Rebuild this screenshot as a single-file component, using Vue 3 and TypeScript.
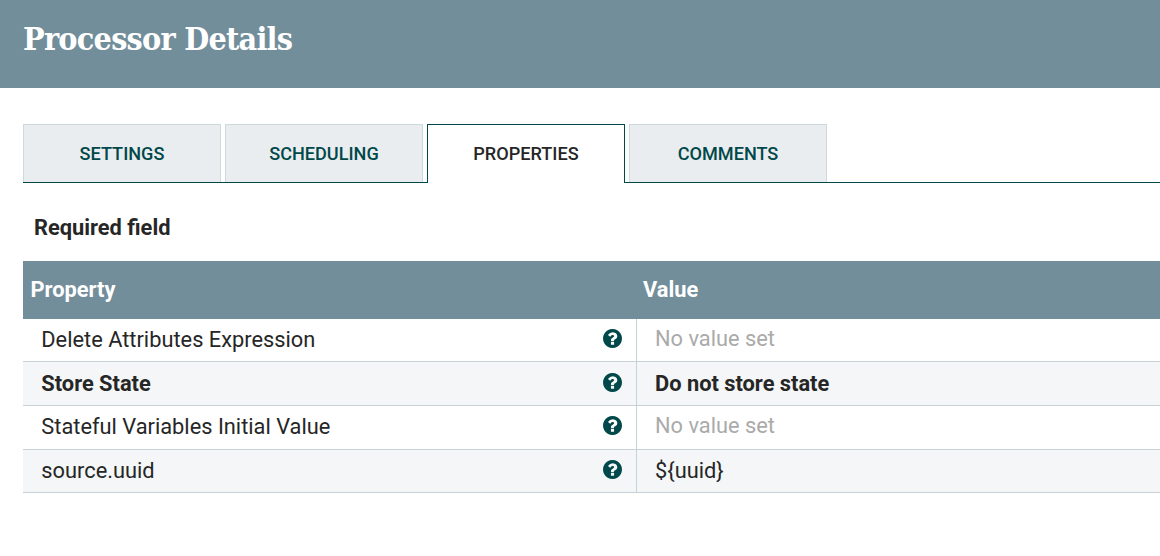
<script setup lang="ts">
interface Tab {
  label: string
  active: boolean
}

interface Property {
  name: string
  value: string | null
  required: boolean
}

const tabs: Tab[] = [
  { label: 'SETTINGS', active: false },
  { label: 'SCHEDULING', active: false },
  { label: 'PROPERTIES', active: true },
  { label: 'COMMENTS', active: false },
]

const properties: Property[] = [
  { name: 'Delete Attributes Expression', value: null, required: false },
  { name: 'Store State', value: 'Do not store state', required: true },
  { name: 'Stateful Variables Initial Value', value: null, required: false },
  { name: 'source.uuid', value: '${uuid}', required: false },
]
</script>

<template>
  <div class="dialog">
    <header class="dialog-header">
      <h1 class="title">Processor Details</h1>
    </header>
    <nav class="tabs">
      <div v-for="tab in tabs" :key="tab.label" class="tab" :class="{ active: tab.active }">
        <span>{{ tab.label }}</span>
      </div>
    </nav>
    <div class="legend">Required field</div>
    <section class="grid">
      <div class="grid-header">
        <div class="head-name">Property</div>
        <div class="head-value">Value</div>
      </div>
      <div v-for="p in properties" :key="p.name" class="row" :class="{ required: p.required }">
        <div class="cell-name">
          <span class="text">{{ p.name }}</span>
          <svg class="help" viewBox="128 128 1536 1536">
            <path
              d="M1024 1376v-192q0-14-9-23t-23-9h-192q-14 0-23 9t-9 23v192q0 14 9 23t23 9h192q14 0 23-9t9-23zm256-672q0-88-55.500-163t-138.500-116-170-41q-243 0-371 213-15 24 8 42l132 100q7 6 19 6 16 0 25-12 53-68 86-92 34-24 86-24 48 0 85.500 26t37.500 59q0 38-20 61t-68 45q-63 28-115.500 86.500t-52.500 125.500v36q0 14 9 23t23 9h192q14 0 23-9t9-23q0-19 21.500-49.500t54.500-49.500q32-18 49-28.500t46-35 44.500-48 28-60.500 12.500-81zm384 192q0 209-103 385.500t-279.500 279.500-385.500 103-385.500-103-279.500-279.500-103-385.500 103-385.500 279.500-279.500 385.500-103 385.500 103 279.500 279.500 103 385.500z"
            />
          </svg>
        </div>
        <div class="cell-value" :class="{ unset: p.value === null }">
          <span>{{ p.value ?? 'No value set' }}</span>
        </div>
      </div>
    </section>
  </div>
</template>

<style>
body {
  margin: 0;
  background: #fff;
}
</style>

<style scoped>
.dialog {
  width: 100%;
  height: 556px;
  overflow: hidden;
  background: #fff;
  color: #262626;
  font-family: Roboto, "Liberation Sans", sans-serif;
  font-size: 21.82px;
  white-space: nowrap;
}
.dialog-header {
  box-sizing: border-box;
  height: 88px;
  padding: 19px 0 0 23px;
  background: #728e9b;
}
.title {
  width: max-content;
  margin: 0;
  color: #fff;
  font: bold 32px/40px "Roboto Slab", "DejaVu Serif Condensed", "DejaVu Serif", serif;
  letter-spacing: -0.75px;
}
.tabs {
  display: flex;
  height: 59px;
  margin: 36px 0 0 23px;
  background: linear-gradient(#004849, #004849) bottom / 100% 1px no-repeat;
}
.tab {
  box-sizing: border-box;
  width: 198px;
  height: 58px;
  margin-right: 4px;
  border: 1px solid #ccdadb;
  border-bottom: 0;
  background: #e9edf0;
  color: #004849;
  font-size: 18.12px;
  font-weight: 500;
  line-height: 58px;
  text-align: center;
}
.tab.active {
  height: 59px;
  border-color: #004849;
  background: #fff;
  color: #262626;
}
.legend {
  margin: 30px 0 0 34px;
  line-height: 30px;
  font-weight: 700;
}
.grid {
  margin: 18px 0 0 23px;
}
.grid-header {
  display: flex;
  height: 58px;
  background: #728e9b;
  color: #fff;
  font-weight: 700;
  line-height: 57px;
}
.head-name {
  width: 605.5px;
  padding-left: 7.5px;
}
.head-value {
  padding-left: 7px;
}
.row {
  box-sizing: border-box;
  display: flex;
  height: 44px;
  border-bottom: 1px solid #c7d2d7;
}
.row:nth-child(2),
.row:last-child {
  height: 43px;
}
.row:nth-child(odd) {
  background: #f4f6f7;
}
.row.required {
  font-weight: 700;
}
.cell-name {
  box-sizing: border-box;
  display: flex;
  justify-content: space-between;
  width: 614px;
  padding: 0 14.5px 0 18.3px;
  border-right: 1px solid #c7d2d7;
  line-height: 42px;
}
.help {
  width: 19px;
  height: 19px;
  margin-top: 10px;
  fill: #004849;
}
.cell-value {
  padding-left: 18px;
  line-height: 42px;
}
.cell-value.unset {
  color: #aaa;
  line-height: 40px;
}
.row.required .cell-name,
.row.required .cell-value {
  line-height: 44px;
}
.row.required .help {
  margin-top: 11px;
}
</style>
